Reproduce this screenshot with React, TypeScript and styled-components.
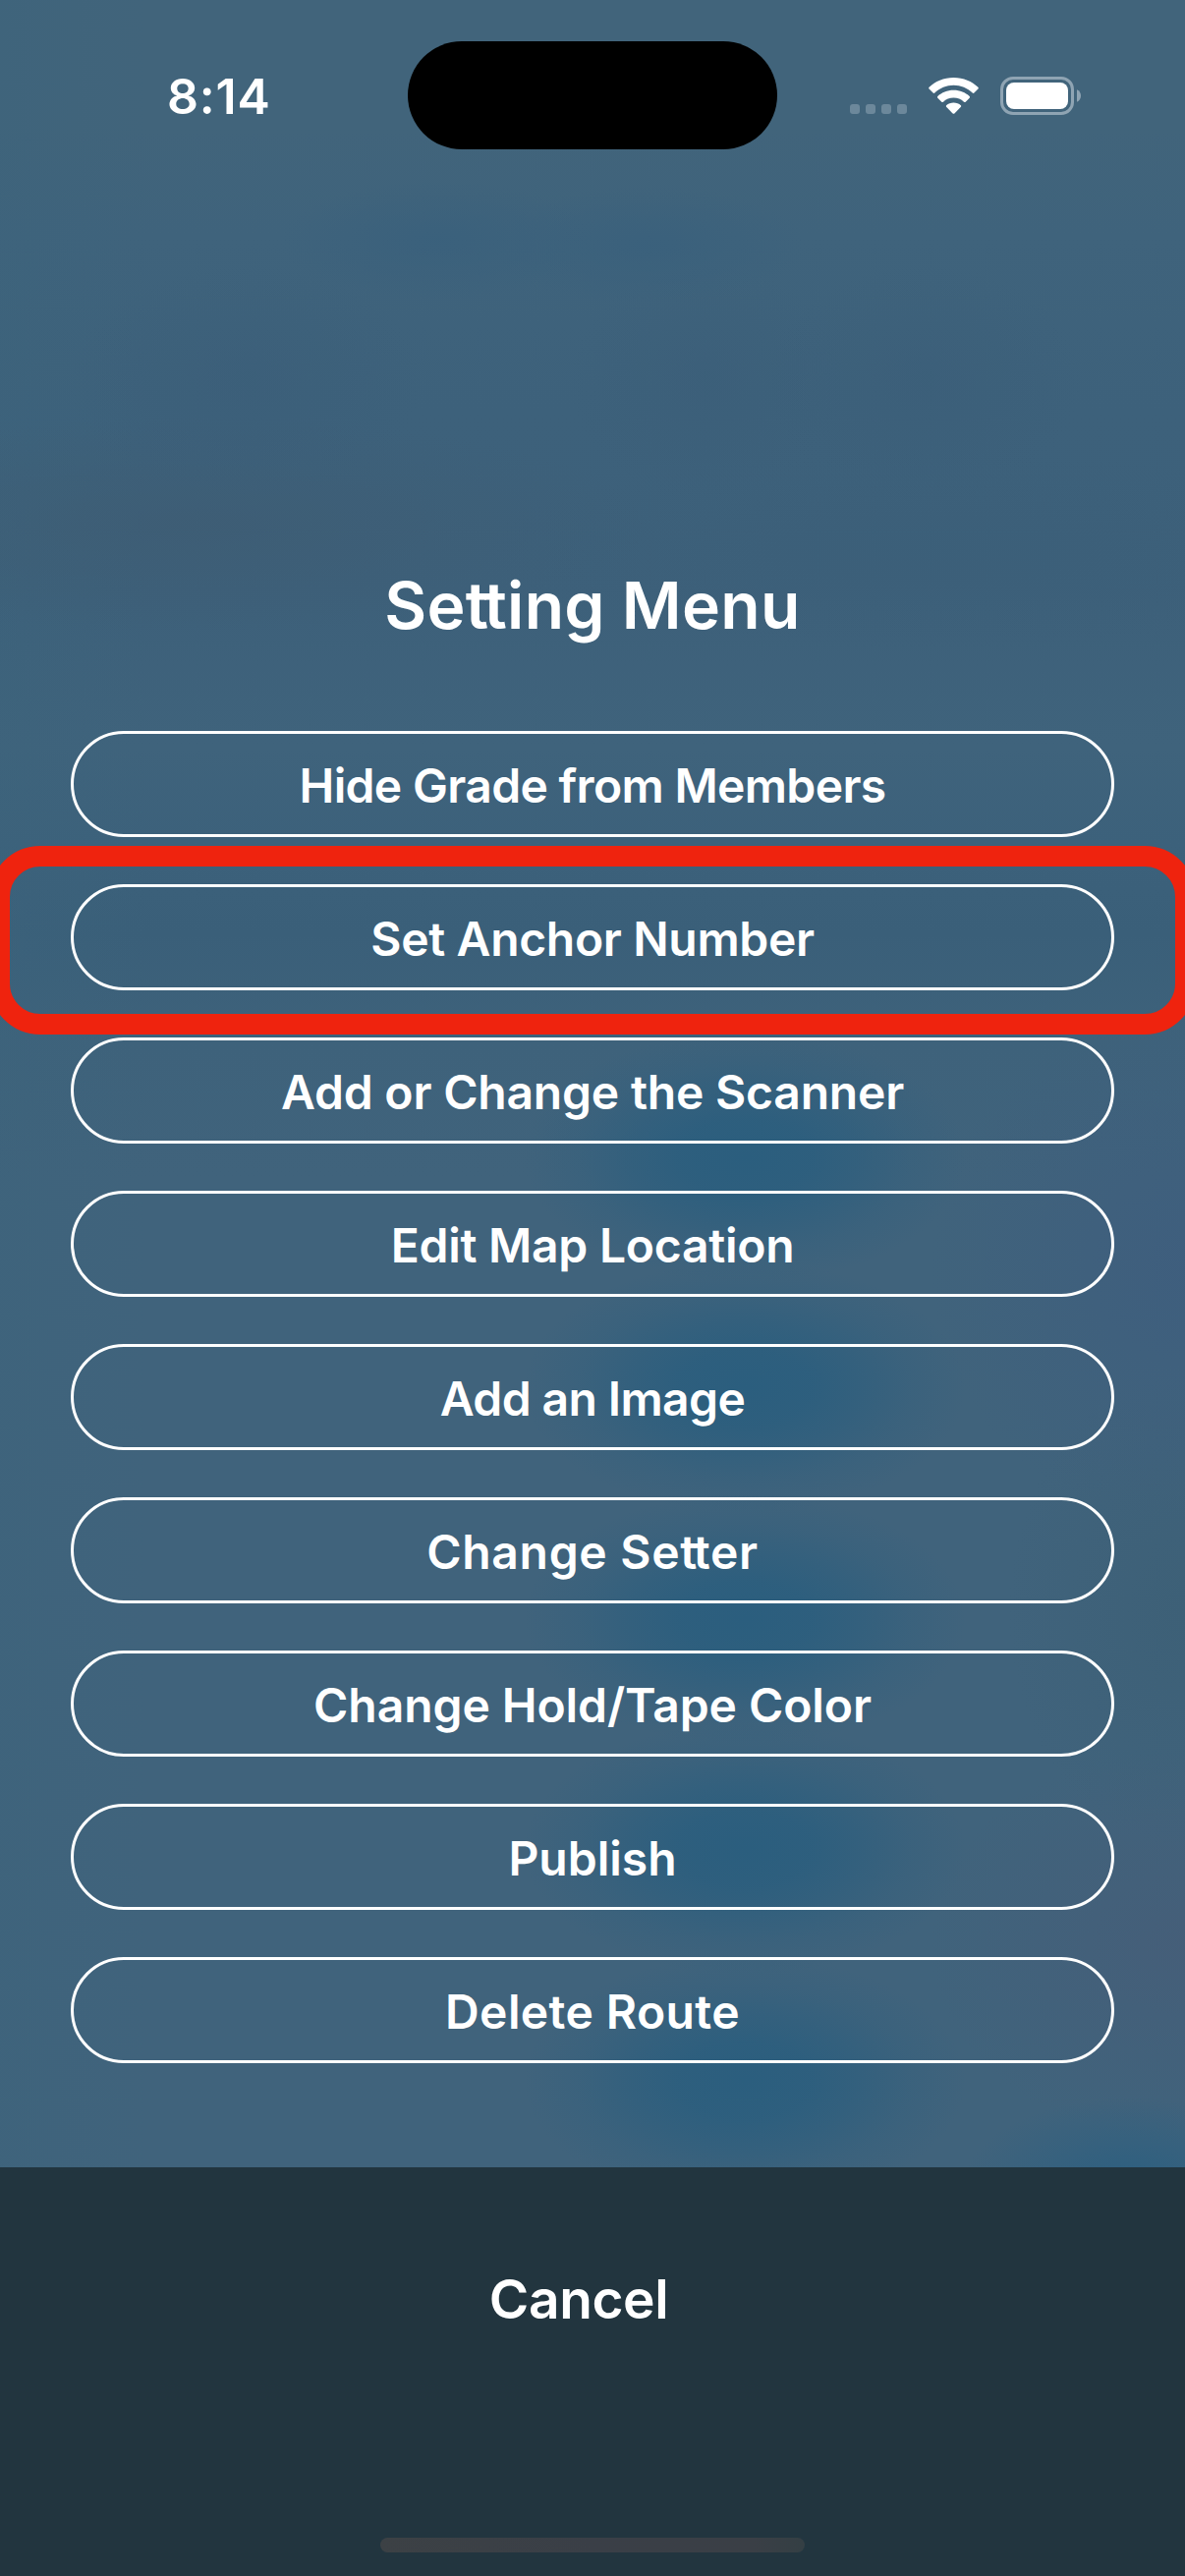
import React from "react";
import styled, { createGlobalStyle } from "styled-components";

const GlobalStyle = createGlobalStyle`
  *, *::before, *::after { box-sizing: border-box; }
  body { margin: 0; background: #40637b; }
`;

const FONT = `Inter, "Liberation Sans", sans-serif`;

/* One soft blue glow of the column that shines through behind the buttons. */
const glow = (y: number) =>
  `radial-gradient(ellipse 225px 128px at 758px ${y}px, rgba(43, 94, 126, 1) 0%, rgba(43, 94, 126, 0.88) 30%, rgba(43, 94, 126, 0.6) 52%, rgba(43, 94, 126, 0.25) 75%, rgba(43, 94, 126, 0) 100%)`;

const Screen = styled.div`
  width: 1206px;
  height: 2622px;
  display: flex;
  flex-direction: column;
  overflow: hidden;
  color: #fff;
  font-family: ${FONT};
  font-weight: 600;
  background:
    ${[1178, 1412, 1648, 1882, 2118].map(glow).join(",")},
    radial-gradient(ellipse 170px 90px at 1150px 2225px, #2c5f80 0%, rgba(44, 95, 128, 0) 100%),
    radial-gradient(ellipse 260px 260px at 1206px 1290px, rgba(62, 93, 126, 0.8) 0%, rgba(62, 93, 126, 0) 100%),
    radial-gradient(ellipse 260px 200px at 1206px 1980px, rgba(70, 93, 120, 0.8) 0%, rgba(70, 93, 120, 0) 100%),
    radial-gradient(ellipse 180px 240px at 1206px 1640px, #3d6077 0%, rgba(61, 96, 119, 0) 100%),
    radial-gradient(ellipse 160px 60px at 445px 245px, rgba(57, 96, 124, 0.8) 0%, rgba(57, 96, 124, 0) 100%),
    radial-gradient(ellipse 160px 60px at 660px 250px, rgba(57, 96, 124, 0.8) 0%, rgba(57, 96, 124, 0) 100%),
    radial-gradient(ellipse 180px 120px at 250px 390px, rgba(58, 93, 120, 0.5) 0%, rgba(58, 93, 120, 0) 100%),
    radial-gradient(ellipse 140px 120px at 720px 390px, rgba(58, 93, 120, 0.5) 0%, rgba(58, 93, 120, 0) 100%),
    radial-gradient(ellipse 160px 120px at 940px 390px, rgba(58, 93, 120, 0.5) 0%, rgba(58, 93, 120, 0) 100%),
    radial-gradient(ellipse 460px 110px at 200px 535px, rgba(62, 92, 115, 0.7) 0%, rgba(62, 92, 115, 0) 100%),
    radial-gradient(ellipse 460px 100px at 950px 560px, rgba(58, 94, 120, 0.5) 0%, rgba(58, 94, 120, 0) 100%),
    linear-gradient(90deg, rgba(60, 100, 124, 0.4) 0, rgba(60, 100, 124, 0) 150px),
    linear-gradient(180deg, #41647b 0, #41647b 130px, #3f637c 240px, #3d617b 420px, #3d607a 600px, #3f637c 760px, #3c617b 860px, #3a5f79 950px, #3e627b 1060px, #40637c 1200px, #40637c 100%);
`;

const StatusBar = styled.header`
  height: 194px;
  flex: none;
  display: grid;
  grid-template-columns: 415px 376px 415px;
  align-items: start;
  padding-top: 42px;
`;

const Clock = styled.time`
  justify-self: start;
  margin: 26px 0 0 170px;
  font-size: 50px;
  line-height: 60px;
  letter-spacing: 0.8px;
`;

const Island = styled.div`
  height: 110px;
  border-radius: 55px;
  background: #000;
`;

const StatusIcons = styled.div`
  display: flex;
  padding: 36px 0 0 74px;
`;

const SignalDots = styled.div`
  display: flex;
  gap: 6px;
  padding-top: 28px;
  margin-right: 22px;
`;

const Dot = styled.i`
  width: 10px;
  height: 10px;
  border-radius: 3px;
  background: #6c889b;
`;

const WifiIcon = styled.svg`
  display: block;
  width: 52px;
  height: 39px;
  margin-right: 21px;
`;

const BatteryIcon = styled.svg`
  display: block;
  width: 84px;
  height: 39px;
`;

const Sheet = styled.main`
  height: 2012px;
  flex: none;
  display: flex;
  flex-direction: column;
`;

const Title = styled.h1`
  margin: 382px 0 0;
  height: 80px;
  font-size: 66px;
  line-height: 80px;
  font-weight: 600;
  text-align: center;
  letter-spacing: 0.3px;
`;

const Actions = styled.nav`
  display: flex;
  flex-direction: column;
  gap: 48px;
  margin: 88px 72px 0;
`;

const ActionSlot = styled.div`
  position: relative;
  display: flex;
`;

const ActionButton = styled.button<{ $tracking: number }>`
  flex: 1;
  height: 108px;
  padding: 4px 0 0;
  border: 3px solid #fff;
  border-radius: 54px;
  background: transparent;
  color: inherit;
  font: 600 48px/60px ${FONT};
  letter-spacing: ${(p) => p.$tracking}px;
  white-space: nowrap;
`;

const Highlight = styled.span`
  position: absolute;
  inset: -39px -83px -45px;
  border: 21px solid #ef230e;
  border-radius: 52px;
  pointer-events: none;
`;

const Joined = styled.span`
  letter-spacing: -0.07em;
`;

const Footer = styled.footer`
  flex: 1;
  display: flex;
  flex-direction: column;
  justify-content: space-between;
  align-items: center;
  padding: 100px 0 24px;
  background: #22353f;
`;

const CancelButton = styled.button`
  margin-right: 28px;
  padding: 0;
  border: 0;
  background: transparent;
  color: inherit;
  font: 600 55px/68px ${FONT};
  letter-spacing: -0.4px;
`;

const HomeIndicator = styled.div`
  width: 432px;
  height: 15px;
  border-radius: 8px;
  background: linear-gradient(90deg, #3c4145, #3a3f47 50%, #3a3f46 88%, #343f44);
`;

type Action = { label: string; tracking: number; highlighted?: boolean };

const ACTIONS: Action[] = [
  { label: "Hide Grade from Members", tracking: -0.66 },
  { label: "Set Anchor Number", tracking: -0.34, highlighted: true },
  { label: "Add or Change the Scanner", tracking: -0.2 },
  { label: "Edit Map Location", tracking: -0.25 },
  { label: "Add an Image", tracking: -0.6 },
  { label: "Change Setter", tracking: 0.7 },
  { label: "Change Hold/Tape Color", tracking: -0.07 },
  { label: "Publish", tracking: 0 },
  { label: "Delete Route", tracking: 0.4 },
];

/* Tightens a double t so the crossbars run together. */
function Label({ text }: { text: string }) {
  const at = text.indexOf("tt");
  if (at < 0) return <>{text}</>;
  return (
    <>
      {text.slice(0, at)}
      <Joined>t</Joined>
      {text.slice(at + 1)}
    </>
  );
}

export default function App() {
  return (
    <>
      <GlobalStyle />
      <Screen>
        <StatusBar>
          <Clock>8:14</Clock>
          <Island />
          <StatusIcons>
            <SignalDots>
              <Dot />
              <Dot />
              <Dot />
              <Dot />
            </SignalDots>
            <WifiIcon viewBox="945 78 52 39" fill="#fff">
              <path d="M970.5 79C980.5 79 989.3 82.9 995.4 88.8Q996.2 89.6 995.4 90.5L991.4 94.5Q990.6 95.3 989.7 94.5C984.6 89.7 977.9 86.8 970.5 86.8C963.1 86.8 956.4 89.7 951.3 94.5Q950.4 95.3 949.6 94.5L945.6 90.5Q944.8 89.6 945.6 88.8C951.7 82.9 960.5 79 970.5 79Z" />
              <path d="M970.5 91.8C976.9 91.8 982.6 94.2 986.7 98Q987.5 98.8 986.7 99.7L982.7 103.7Q981.9 104.4 981 103.7C978.2 101.1 974.5 99.6 970.5 99.6C966.5 99.6 962.8 101.1 960 103.7Q959.1 104.4 958.3 103.7L954.3 99.7Q953.5 98.8 954.3 98C958.4 94.2 964.1 91.8 970.5 91.8Z" />
              <path d="M970.5 104.5C973.3 104.5 976 105.5 977.9 107.2Q978.6 108 977.9 108.8L971.4 115.4Q970.5 116.2 969.6 115.4L963.1 108.8Q962.4 108 963.1 107.2C965 105.5 967.7 104.5 970.5 104.5Z" />
            </WifiIcon>
            <BatteryIcon viewBox="0 0 84 39">
              <rect x="1.5" y="1.5" width="72" height="36" rx="11.5" fill="none" stroke="#8fa4b3" strokeWidth="3" />
              <rect x="6" y="6" width="63" height="27" rx="8" fill="#fff" />
              <path d="M78 13.2C80.6 14.2 82 16.8 82 19.5S80.6 24.8 78 25.8Z" fill="#8fa4b3" />
            </BatteryIcon>
          </StatusIcons>
        </StatusBar>
        <Sheet>
          <Title>
            <Label text="Setting Menu" />
          </Title>
          <Actions>
            {ACTIONS.map((a) => (
              <ActionSlot key={a.label}>
                <ActionButton $tracking={a.tracking}>
                  <Label text={a.label} />
                </ActionButton>
                {a.highlighted && <Highlight />}
              </ActionSlot>
            ))}
          </Actions>
        </Sheet>
        <Footer>
          <CancelButton>Cancel</CancelButton>
          <HomeIndicator />
        </Footer>
      </Screen>
    </>
  );
}
